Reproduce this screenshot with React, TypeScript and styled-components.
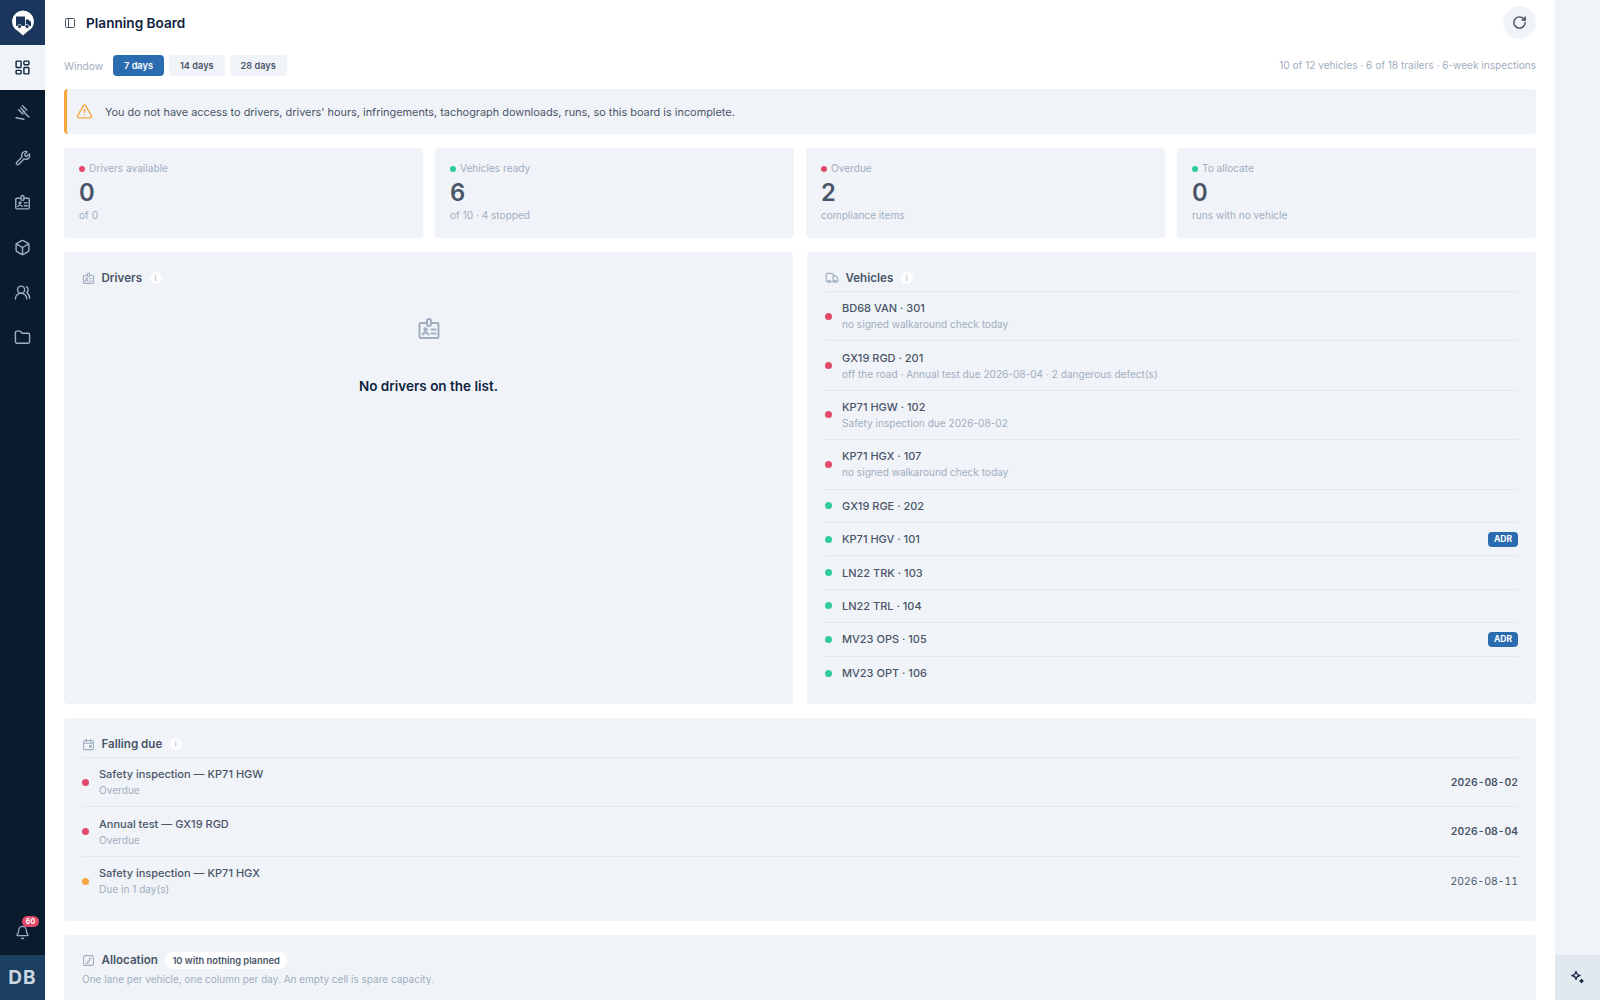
import styled, { createGlobalStyle } from 'styled-components';
import {
  Bell,
  Box,
  Folder,
  LayoutDashboard,
  PanelLeft,
  RotateCw,
  TriangleAlert,
  Truck,
  UsersRound,
  Wrench,
} from 'lucide-react';
import type { ReactNode } from 'react';

const ink = '#0f2440';
const body = '#4a5568';
const muted = '#a0aec0';
const panel = '#f0f4f8';
const red = '#e2496a';
const green = '#2fcb9f';
const amber = '#f6a63f';
const blue = '#2b6cb0';

const GlobalStyle = createGlobalStyle`
  html, body { margin: 0; padding: 0; height: 100%; overflow: hidden; background: #fff; }
  body { font-family: Inter, "Liberation Sans", sans-serif; color: ${body}; }
  * { box-sizing: border-box; }
`;

const Shell = styled.div`
  display: flex;
  width: 1600px;
  height: 1000px;
  overflow: hidden;
`;

const Sidebar = styled.aside`
  width: 45px;
  flex: none;
  display: flex;
  flex-direction: column;
  background: #0a1b2e;
`;

const LogoBlock = styled.div`
  height: 45px;
  display: flex;
  align-items: center;
  justify-content: center;
  background: #1a365d;
`;

const NavItem = styled.div<{ $active?: boolean }>`
  height: 45px;
  display: flex;
  align-items: center;
  justify-content: center;
  background: ${(p) => (p.$active ? panel : 'transparent')};
  color: ${(p) => (p.$active ? ink : muted)};
`;

const SideSpacer = styled.div`
  flex: 1;
`;

const BellItem = styled(NavItem)`
  position: relative;
`;

const BellBadge = styled.span`
  position: absolute;
  top: 6px;
  left: 22px;
  width: 17px;
  height: 11px;
  border-radius: 6px;
  background: ${red};
  color: #fff;
  font-size: 7px;
  font-weight: 700;
  line-height: 11px;
  text-align: center;
`;

const UserBlock = styled.div`
  height: 45px;
  display: flex;
  align-items: center;
  justify-content: center;
  background: #1a3f5f;
  color: #cbd5e0;
  font-size: 19px;
  font-weight: 700;
  letter-spacing: 1px;
`;

const Main = styled.main`
  width: 1510px;
  flex: none;
  padding: 0 19px;
  display: flex;
  flex-direction: column;
  & > * {
    flex: none;
  }
`;

const Rail = styled.aside`
  flex: 1;
  display: flex;
  flex-direction: column;
  justify-content: flex-end;
  background: ${panel};
`;

const RailButton = styled.div`
  height: 45px;
  display: flex;
  align-items: center;
  justify-content: center;
  background: #e2e8f0;
`;

const Header = styled.header`
  height: 45px;
  display: flex;
  align-items: center;
  gap: 10px;
  color: ${body};
`;

const Title = styled.h1`
  flex: 1;
  margin: 0;
  font-size: 13.6px;
  font-weight: 600;
  color: ${ink};
`;

const RoundButton = styled.div`
  width: 33px;
  height: 33px;
  border-radius: 50%;
  display: flex;
  align-items: center;
  justify-content: center;
  background: ${panel};
  color: #3f4a5f;
`;

const WindowRow = styled.div`
  height: 21px;
  margin-top: 10px;
  display: flex;
  align-items: center;
  gap: 5px;
`;

const WindowLabel = styled.span`
  font-size: 10.2px;
  color: ${muted};
  margin-right: 5px;
`;

const WindowButton = styled.div<{ $active?: boolean }>`
  height: 21px;
  padding: 0 11px;
  display: flex;
  align-items: center;
  border-radius: 4px;
  font-size: 9.2px;
  font-weight: 600;
  background: ${(p) => (p.$active ? blue : panel)};
  color: ${(p) => (p.$active ? '#fff' : body)};
`;

const Scope = styled.span`
  margin-left: auto;
  margin-bottom: 2px;
  font-size: 10.1px;
  color: ${muted};
`;

const Banner = styled.div`
  height: 45px;
  margin-top: 13px;
  padding-left: 9px;
  display: flex;
  align-items: center;
  gap: 12px;
  border-left: 3px solid ${amber};
  border-radius: 4px;
  background: ${panel};
  color: ${amber};
`;

const BannerText = styled.span`
  font-size: 10.9px;
  color: ${body};
`;

const Stats = styled.section`
  margin-top: 14px;
  display: grid;
  grid-template-columns: repeat(4, 1fr);
  gap: 12px;
`;

const StatCard = styled.div`
  height: 90px;
  padding: 14px 15px;
  border-radius: 4px;
  background: ${panel};
`;

const StatLabel = styled.div`
  display: flex;
  align-items: center;
  gap: 4px;
  font-size: 10.1px;
  line-height: 13px;
  color: ${muted};
`;

const StatValue = styled.div`
  margin-top: 4px;
  font-size: 23.8px;
  font-weight: 600;
  line-height: 28px;
  color: ${body};
`;

const StatNote = styled.div`
  margin-top: 2px;
  font-size: 10.1px;
  line-height: 13px;
  color: ${muted};
`;

const Dot = styled.span<{ $color: string; $size?: number }>`
  flex: none;
  width: ${(p) => p.$size ?? 7}px;
  height: ${(p) => p.$size ?? 7}px;
  border-radius: 50%;
  background: ${(p) => p.$color};
`;

const Columns = styled.section`
  margin-top: 14px;
  display: grid;
  grid-template-columns: 1fr 1fr;
  gap: 14px;
`;

const Panel = styled.div`
  padding: 17px 18px 14px;
  border-radius: 4px;
  background: ${panel};
`;

const TallPanel = styled(Panel)`
  height: 452px;
`;

const DuePanel = styled(Panel)`
  margin-top: 14px;
  height: 203px;
`;

const AllocationPanel = styled(Panel)`
  margin-top: 14px;
  padding-top: 16px;
  height: 120px;
`;

const PanelHead = styled.div<{ $line?: boolean }>`
  box-sizing: content-box;
  height: 18px;
  display: flex;
  align-items: center;
  gap: 6.5px;
  border-bottom: ${(p) => (p.$line ? '1px solid #e2e8f0' : 'none')};
  padding-bottom: ${(p) => (p.$line ? '4px' : '0')};
  color: ${muted};
`;

const PanelTitle = styled.span`
  font-size: 11.6px;
  font-weight: 600;
  color: ${body};
`;

const InfoMark = styled.span`
  width: 12px;
  height: 12px;
  margin-left: 1px;
  border-radius: 50%;
  background: #fff;
  color: ${muted};
  font-size: 8px;
  line-height: 12px;
  text-align: center;
`;

const Pill = styled.span`
  height: 17px;
  margin-left: 1px;
  padding: 0 7px;
  border-radius: 9px;
  background: #fff;
  color: ${body};
  font-size: 9.35px;
  font-weight: 600;
  line-height: 17px;
`;

const AllocationNote = styled.div`
  margin-top: 4px;
  font-size: 10px;
  color: ${muted};
`;

const Empty = styled.div`
  display: flex;
  flex-direction: column;
  align-items: center;
  padding-top: 30px;
  color: ${muted};
`;

const EmptyText = styled.div`
  margin-top: 37px;
  font-size: 13.5px;
  font-weight: 600;
  color: ${ink};
`;

const Row = styled.div<{ $tall: boolean }>`
  height: ${(p) => (p.$tall ? 49.4 : 33.4)}px;
  display: flex;
  align-items: center;
  gap: 10px;
  border-bottom: 1px solid #e2e8f0;
  &:last-child {
    border-bottom: none;
  }
`;

const RowText = styled.div`
  flex: 1;
  min-width: 0;
`;

const RowTitle = styled.div`
  font-size: 11px;
  font-weight: 500;
  line-height: 16px;
  color: ${body};
`;

const RowSub = styled.div`
  font-size: 10.1px;
  line-height: 16px;
  color: ${muted};
`;

const Adr = styled.span`
  padding: 0 6px;
  height: 15px;
  border-radius: 4px;
  background: ${blue};
  color: #fff;
  font-size: 8.5px;
  font-weight: 700;
  line-height: 15px;
`;

const DueDate = styled.span<{ $strong: boolean }>`
  font-size: 10.4px;
  font-weight: ${(p) => (p.$strong ? 600 : 400)};
  font-variant-numeric: tabular-nums;
  color: ${body};
`;

const vehicles = [
  { name: 'BD68 VAN · 301', note: 'no signed walkaround check today', bad: true },
  { name: 'GX19 RGD · 201', note: 'off the road · Annual test due 2026-08-04 · 2 dangerous defect(s)', bad: true },
  { name: 'KP71 HGW · 102', note: 'Safety inspection due 2026-08-02', bad: true },
  { name: 'KP71 HGX · 107', note: 'no signed walkaround check today', bad: true },
  { name: 'GX19 RGE · 202' },
  { name: 'KP71 HGV · 101', adr: true },
  { name: 'LN22 TRK · 103' },
  { name: 'LN22 TRL · 104' },
  { name: 'MV23 OPS · 105', adr: true },
  { name: 'MV23 OPT · 106' },
];

const dueItems = [
  { name: 'Safety inspection — KP71 HGW', note: 'Overdue', date: '2026-08-02', color: red },
  { name: 'Annual test — GX19 RGD', note: 'Overdue', date: '2026-08-04', color: red },
  { name: 'Safety inspection — KP71 HGX', note: 'Due in 1 day(s)', date: '2026-08-11', color: amber },
];

const stats = [
  { label: 'Drivers available', value: '0', note: 'of 0', color: red },
  { label: 'Vehicles ready', value: '6', note: 'of 10 · 4 stopped', color: green },
  { label: 'Overdue', value: '2', note: 'compliance items', color: red },
  { label: 'To allocate', value: '0', note: 'runs with no vehicle', color: green },
];

const BadgeIcon = ({ size }: { size: number }) => (
  <svg width={size} height={size} viewBox="0 0 24 24" fill="none" stroke="currentColor" strokeWidth="2" strokeLinecap="round" strokeLinejoin="round">
    <path d="M9 6H4a1.500 1.500 0 0 0-1.500 1.500v12A1.500 1.500 0 0 0 4 21h16a1.500 1.500 0 0 0 1.500-1.500v-12A1.500 1.500 0 0 0 20 6h-5" />
    <rect x="10" y="2" width="4" height="7" rx="2" />
    <circle cx="8.500" cy="12.500" r="1.200" fill="currentColor" />
    <path d="M5.500 17.500c.5-1.500 1.500-1.800 3-1.800s2.500.3 3 1.800M14.500 12.500h4M14.500 16.500h4" />
  </svg>
);

const GavelIcon = ({ size }: { size: number }) => (
  <svg width={size} height={size} viewBox="0 0 24 24" fill="none" stroke="currentColor" strokeWidth="2" strokeLinecap="round" strokeLinejoin="round">
    <path d="M3 19.500l11 2" />
    <path d="M12 2.500l6 6" />
    <path d="M6.500 8l6 6" />
    <path d="M9.500 5.500L15 11" />
    <path d="M13 10.500l8 8" />
  </svg>
);

const CalendarMark = ({ size }: { size: number }) => (
  <svg width={size} height={size} viewBox="0 0 24 24" fill="none" stroke="currentColor" strokeWidth="2" strokeLinecap="round" strokeLinejoin="round">
    <rect x="3" y="4.500" width="18" height="17" rx="2" />
    <path d="M3 9.500h18M8 2.500v4M16 2.500v4" />
    <rect x="14" y="14" width="3" height="3" fill="currentColor" />
  </svg>
);

const ListMark = ({ size }: { size: number }) => (
  <svg width={size} height={size} viewBox="0 0 24 24" fill="none" stroke="currentColor" strokeWidth="2" strokeLinecap="round" strokeLinejoin="round">
    <rect x="3" y="3" width="18" height="18" rx="2" />
    <path d="M7 17h4v-4h3V8h3" />
  </svg>
);

const Logo = () => (
  <svg width="24" height="26" viewBox="0 0 24 26">
    <path d="M12 0.500a11 11 0 0 1 4.500 21L12 25.500l-4.500-4A11 11 0 0 1 12 0.500z" fill="#fff" />
    <path d="M5 6.500h9v9.500H5zM14.800 9.500h2.700L20 12v4h-5.200z" fill="#1a365d" />
    <circle cx="8.500" cy="16.500" r="2" fill="#1a365d" stroke="#fff" strokeWidth="0.700" />
    <circle cx="16" cy="16.500" r="2" fill="#1a365d" stroke="#fff" strokeWidth="0.700" />
  </svg>
);

const Sparkle = () => (
  <svg width="15" height="15" viewBox="0 0 15 15" fill="none" stroke={ink} strokeWidth="1.300" strokeLinejoin="round">
    <path d="M6 1.500c.4 2.600 1.400 3.600 4 4-2.600.4-3.600 1.400-4 4-.4-2.600-1.400-3.600-4-4 2.600-.4 3.600-1.400 4-4z" />
    <path d="M11.500 9.500c.2 1 .6 1.400 1.600 1.600-1 .2-1.400.6-1.600 1.600-.2-1-.6-1.400-1.600-1.600 1-.2 1.400-.6 1.600-1.600z" fill={ink} />
  </svg>
);

const PanelHeading = ({ icon, title, line }: { icon: ReactNode; title: string; line?: boolean }) => (
  <PanelHead $line={line}>
    {icon}
    <PanelTitle>{title}</PanelTitle>
    <InfoMark>i</InfoMark>
  </PanelHead>
);

export default function App() {
  return (
    <>
      <GlobalStyle />
      <Shell>
        <Sidebar>
          <LogoBlock>
            <Logo />
          </LogoBlock>
          <NavItem $active>
            <LayoutDashboard size={17} />
          </NavItem>
          <NavItem>
            <GavelIcon size={17} />
          </NavItem>
          <NavItem>
            <Wrench size={16} />
          </NavItem>
          <NavItem>
            <BadgeIcon size={17} />
          </NavItem>
          <NavItem>
            <Box size={17} />
          </NavItem>
          <NavItem>
            <UsersRound size={17} />
          </NavItem>
          <NavItem>
            <Folder size={17} />
          </NavItem>
          <SideSpacer />
          <BellItem>
            <Bell size={15} />
            <BellBadge>60</BellBadge>
          </BellItem>
          <UserBlock>DB</UserBlock>
        </Sidebar>
        <Main>
          <Header>
            <PanelLeft size={12} />
            <Title>Planning Board</Title>
            <RoundButton>
              <RotateCw size={15} strokeWidth={2.2} />
            </RoundButton>
          </Header>
          <WindowRow>
            <WindowLabel>Window</WindowLabel>
            <WindowButton $active>7 days</WindowButton>
            <WindowButton>14 days</WindowButton>
            <WindowButton>28 days</WindowButton>
            <Scope>10 of 12 vehicles · 6 of 18 trailers · 6-week inspections</Scope>
          </WindowRow>
          <Banner>
            <TriangleAlert size={17} />
            <BannerText>You do not have access to drivers, drivers' hours, infringements, tachograph downloads, runs, so this board is incomplete.</BannerText>
          </Banner>
          <Stats>
            {stats.map((s) => (
              <StatCard key={s.label}>
                <StatLabel>
                  <Dot $color={s.color} $size={6} />
                  {s.label}
                </StatLabel>
                <StatValue>{s.value}</StatValue>
                <StatNote>{s.note}</StatNote>
              </StatCard>
            ))}
          </Stats>
          <Columns>
            <TallPanel>
              <PanelHeading icon={<BadgeIcon size={13} />} title="Drivers" />
              <Empty>
                <BadgeIcon size={24} />
                <EmptyText>No drivers on the list.</EmptyText>
              </Empty>
            </TallPanel>
            <TallPanel>
              <PanelHeading icon={<Truck size={14} />} title="Vehicles" line />
              {vehicles.map((v) => (
                <Row key={v.name} $tall={!!v.note}>
                  <Dot $color={v.bad ? red : green} />
                  <RowText>
                    <RowTitle>{v.name}</RowTitle>
                    {v.note && <RowSub>{v.note}</RowSub>}
                  </RowText>
                  {v.adr && <Adr>ADR</Adr>}
                </Row>
              ))}
            </TallPanel>
          </Columns>
          <DuePanel>
            <PanelHeading icon={<CalendarMark size={13} />} title="Falling due" line />
            {dueItems.map((d) => (
              <Row key={d.name} $tall>
                <Dot $color={d.color} />
                <RowText>
                  <RowTitle>{d.name}</RowTitle>
                  <RowSub>{d.note}</RowSub>
                </RowText>
                <DueDate $strong={d.color === red}>{d.date}</DueDate>
              </Row>
            ))}
          </DuePanel>
          <AllocationPanel>
            <PanelHead>
              <ListMark size={13} />
              <PanelTitle>Allocation</PanelTitle>
              <Pill>10 with nothing planned</Pill>
            </PanelHead>
            <AllocationNote>One lane per vehicle, one column per day. An empty cell is spare capacity.</AllocationNote>
          </AllocationPanel>
        </Main>
        <Rail>
          <RailButton>
            <Sparkle />
          </RailButton>
        </Rail>
      </Shell>
    </>
  );
}
